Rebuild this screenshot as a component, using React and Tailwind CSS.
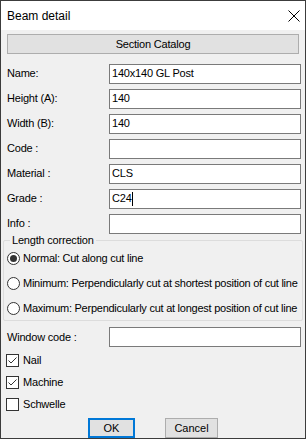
import { useState } from "react";

const font = { fontFamily: '"Liberation Sans", Arial, sans-serif' };

const Field = ({ label, value, caret, tall = true }) => (
  <div className={`flex items-center shrink-0 ${tall ? "h-[25px]" : "h-[20px]"}`}>
    <span className="w-[102px] shrink-0 text-[11px] leading-none text-black tracking-[-0.2px]">{label}</span>
    <div className="flex-1 h-[20px] border border-[#7a7a7a] bg-white flex items-center px-[2px] text-[11px] text-black tracking-[-0.2px]">
      {value}
      {caret && <span className="w-px h-[14px] bg-black" />}
    </div>
  </div>
);

const Radio = ({ checked, label }) => (
  <div className="flex items-center h-[25px] pl-[3px] gap-[3px]">
    <span className="w-[13px] h-[13px] shrink-0 rounded-full border border-[#333] bg-white flex items-center justify-center">
      {checked && <span className="w-[7px] h-[7px] rounded-full bg-[#333]" />}
    </span>
    <span className="text-[11px] text-black whitespace-nowrap tracking-[-0.25px]">{label}</span>
  </div>
);

const Check = ({ checked, label }) => (
  <div className="flex items-center h-[18px] gap-[4px] -ml-[1px] shrink-0">
    <span className="w-[13px] h-[13px] shrink-0 border border-[#333] bg-white flex items-center justify-center">
      {checked && (
        <svg width="11" height="11" viewBox="0 0 11 11">
          <path d="M1.5 5.5 L4 8 L9.5 2.5" fill="none" stroke="#333" strokeWidth="1" />
        </svg>
      )}
    </span>
    <span className="text-[11px] text-black tracking-[-0.2px]">{label}</span>
  </div>
);

export default function App() {
  const [mode] = useState("normal");

  return (
    <div style={font} className="w-[306px] h-[439px] border border-[#3c3c3c] bg-[#f0f0f0] flex flex-col overflow-hidden">
      {/* Title bar */}
      <div className="h-[29px] shrink-0 bg-white flex items-center justify-between pl-[6px] pr-[5px]">
        <span className="text-[12px] text-black">Beam detail</span>
        <svg width="12" height="12" viewBox="0 0 12 12">
          <path d="M0.5 0.5 L11.5 11.5 M11.5 0.5 L0.5 11.5" stroke="#000" strokeWidth="1" />
        </svg>
      </div>

      <div className="flex flex-col shrink-0 pl-[6px] pr-[4px]">
        <button className="mt-[4px] mr-[2px] h-[20px] shrink-0 border border-[#adadad] bg-[#e1e1e1] text-[11px] text-black tracking-[-0.2px]">
          Section Catalog
        </button>

        <div className="mt-[7px] flex flex-col">
          <Field label="Name:" value="140x140 GL Post" />
          <Field label="Height (A):" value="140" />
          <Field label="Width (B):" value="140" />
          <Field label="Code :" value="" />
          <Field label="Material :" value="CLS" />
          <Field label="Grade :" value="C24" caret />
          <Field label="Info :" value="" />
        </div>
      </div>

      {/* Length correction group */}
      <div className="relative shrink-0 mx-[2px] mt-[4px] h-[81px] border border-[#dcdcdc] rounded-[2px] pt-[5px]">
        <span className="absolute -top-[8px] left-[6px] px-[2px] bg-[#f0f0f0] text-[11px] text-black leading-[15px] tracking-[-0.2px]">
          Length correction
        </span>
        <Radio checked={mode === "normal"} label="Normal: Cut along cut line" />
        <Radio checked={mode === "min"} label="Minimum: Perpendicularly cut at shortest position of cut line" />
        <Radio checked={mode === "max"} label="Maximum: Perpendicularly cut at longest position of cut line" />
      </div>

      <div className="flex flex-col shrink-0 pl-[6px] pr-[4px] mt-[6px] gap-[4px]">
        <Field label="Window code :" value="" tall={false} />
        <Check checked label="Nail" />
        <Check checked label="Machine" />
        <Check label="Schwelle" />
      </div>

      <div className="flex justify-center shrink-0 gap-[30px] mt-[5px]">
        <button className="w-[47px] h-[20px] border-2 border-[#0078d7] bg-[#e1e1e1] text-[11px] text-black">OK</button>
        <button className="w-[53px] h-[20px] border border-[#adadad] bg-[#e1e1e1] text-[11px] text-black">Cancel</button>
      </div>
    </div>
  );
}
